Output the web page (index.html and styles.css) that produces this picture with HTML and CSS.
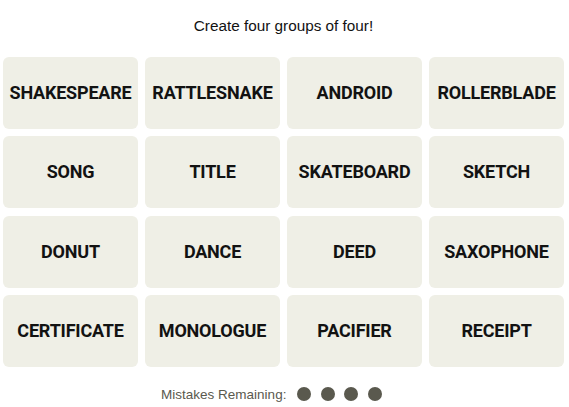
FILE: index.html
```html
<!DOCTYPE html>
<html lang="en">
<head>
<meta charset="utf-8">
<title>Connections</title>
<link rel="stylesheet" href="styles.css">
</head>
<body>
<main class="game">
  <p class="prompt">Create four groups of four!</p>
  <div class="board">
    <button class="tile">SHAKESPEARE</button>
    <button class="tile">RATTLESNAKE</button>
    <button class="tile">ANDROID</button>
    <button class="tile">ROLLERBLADE</button>
    <button class="tile">SONG</button>
    <button class="tile">TITLE</button>
    <button class="tile">SKATEBOARD</button>
    <button class="tile">SKETCH</button>
    <button class="tile">DONUT</button>
    <button class="tile">DANCE</button>
    <button class="tile">DEED</button>
    <button class="tile">SAXOPHONE</button>
    <button class="tile">CERTIFICATE</button>
    <button class="tile">MONOLOGUE</button>
    <button class="tile">PACIFIER</button>
    <button class="tile">RECEIPT</button>
  </div>
  <div class="mistakes">
    <span class="mistakes-label">Mistakes Remaining:</span>
    <span class="dots">
      <span class="dot"></span>
      <span class="dot"></span>
      <span class="dot"></span>
      <span class="dot"></span>
    </span>
  </div>
</main>
</body>
</html>
```

FILE: styles.css
```css
html, body {
  margin: 0;
  padding: 0;
  background: #ffffff;
}

.game {
  width: 569px;
  padding: 0 5px 0 3px;
  box-sizing: border-box;
  font-family: "Liberation Sans", Arial, sans-serif;
}

.prompt {
  margin: 0;
  padding-top: 16px;
  height: 41px;
  line-height: 20px;
  font-size: 15.3px;
  color: #121212;
  text-align: center;
}

.board {
  display: grid;
  grid-template-columns: repeat(4, 135px);
  grid-auto-rows: 72px;
  column-gap: 7px;
  row-gap: 7.33px;
}

.tile {
  border: none;
  margin: 0;
  padding: 0 0 1px;
  border-radius: 6px;
  background: #efefe6;
  color: #121212;
  font-family: Roboto, "Liberation Sans", sans-serif;
  font-weight: 700;
  font-size: 18px;
  letter-spacing: -0.2px;
  display: flex;
  align-items: center;
  justify-content: center;
}

.mistakes {
  display: flex;
  align-items: center;
  justify-content: center;
  gap: 11px;
  margin-top: 19px;
  height: 17px;
  padding-right: 24px;
}

.mistakes-label {
  font-size: 13.5px;
  color: #5a594e;
}

.dots {
  display: flex;
  gap: 9.5px;
}

.dot {
  width: 14px;
  height: 14px;
  border-radius: 50%;
  background: #5a594e;
}
```
